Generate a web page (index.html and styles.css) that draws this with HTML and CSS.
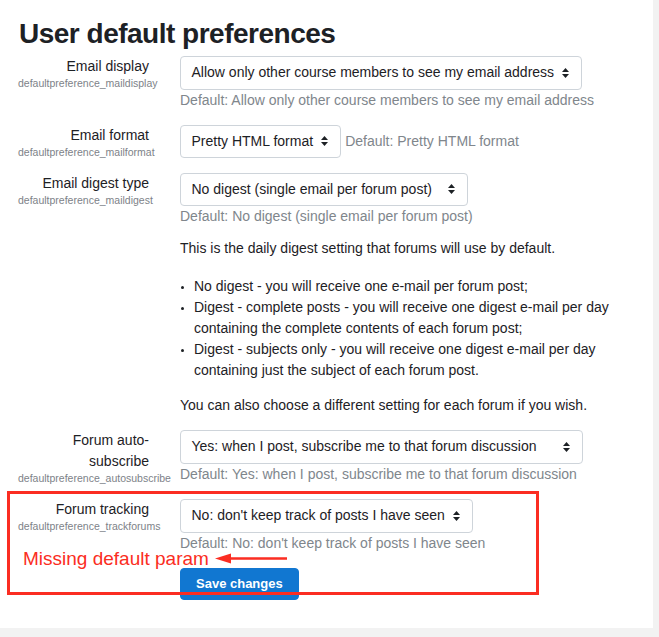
FILE: index.html
```html
<!DOCTYPE html>
<html lang="en">
<head>
<meta charset="utf-8">
<title>User default preferences</title>
<link rel="stylesheet" href="styles.css">
</head>
<body>
<main class="card">
  <h2 class="title">User default preferences</h2>
  <form class="form">
    <div class="frow">
      <div class="flabel"><label>Email display</label><small>defaultpreference_maildisplay</small></div>
      <div class="felement">
        <div class="fline">
          <div class="select"><span>Allow only other course members to see my email address</span><svg class="caret" viewBox="0 0 7 10"><path d="M0 4L3.5 0L7 4Z M0 6L7 6L3.5 10Z"/></svg></div>
          <span class="defaultinfo">Default: Allow only other course members to see my email address</span>
        </div>
      </div>
    </div>
    <div class="frow">
      <div class="flabel"><label>Email format</label><small>defaultpreference_mailformat</small></div>
      <div class="felement">
        <div class="fline">
          <div class="select"><span>Pretty HTML format</span><svg class="caret" viewBox="0 0 7 10"><path d="M0 4L3.5 0L7 4Z M0 6L7 6L3.5 10Z"/></svg></div>
          <span class="defaultinfo">Default: Pretty HTML format</span>
        </div>
      </div>
    </div>
    <div class="frow">
      <div class="flabel"><label>Email digest type</label><small>defaultpreference_maildigest</small></div>
      <div class="felement">
        <div class="fline">
          <div class="select select--m"><span>No digest (single email per forum post)</span><svg class="caret" viewBox="0 0 7 10"><path d="M0 4L3.5 0L7 4Z M0 6L7 6L3.5 10Z"/></svg></div>
          <span class="defaultinfo">Default: No digest (single email per forum post)</span>
        </div>
        <div class="desc">
          <p>This is the daily digest setting that forums will use by default.</p>
          <ul>
            <li>No digest - you will receive one e-mail per forum post;</li>
            <li>Digest - complete posts - you will receive one digest e-mail per day containing the complete contents of each forum post;</li>
            <li>Digest - subjects only - you will receive one digest e-mail per day containing just the subject of each forum post.</li>
          </ul>
          <p class="last">You can also choose a different setting for each forum if you wish.</p>
        </div>
      </div>
    </div>
    <div class="frow">
      <div class="flabel"><label>Forum auto-subscribe</label><small>defaultpreference_autosubscribe</small></div>
      <div class="felement">
        <div class="fline">
          <div class="select select--l"><span>Yes: when I post, subscribe me to that forum discussion</span><svg class="caret" viewBox="0 0 7 10"><path d="M0 4L3.5 0L7 4Z M0 6L7 6L3.5 10Z"/></svg></div>
          <span class="defaultinfo">Default: Yes: when I post, subscribe me to that forum discussion</span>
        </div>
      </div>
    </div>
    <div class="frow">
      <div class="flabel"><label>Forum tracking</label><small>defaultpreference_trackforums</small></div>
      <div class="felement">
        <div class="fline">
          <div class="select"><span>No: don't keep track of posts I have seen</span><svg class="caret" viewBox="0 0 7 10"><path d="M0 4L3.5 0L7 4Z M0 6L7 6L3.5 10Z"/></svg></div>
          <span class="defaultinfo">Default: No: don't keep track of posts I have seen</span>
        </div>
      </div>
    </div>
    <div class="frow">
      <div class="flabel"></div>
      <div class="felement"><button type="button" class="btn">Save changes</button></div>
    </div>
  </form>
  <div class="annot-box"></div>
  <div class="annot-note">Missing default param</div>
  <svg class="annot-arrow" viewBox="0 0 72 11"><path d="M0 5.5L16 0.5L16 10.5Z"/><rect x="14" y="4.25" width="58" height="2.5"/></svg>
</main>
</body>
</html>
```
FILE: styles.css
```css
* { box-sizing: border-box; }
html, body { margin: 0; padding: 0; }
body {
  background: #f2f2f2;
  font-family: "Liberation Sans", Arial, sans-serif;
  font-size: 14px;
  line-height: 1.5;
  color: #1d2125;
}
.card {
  position: relative;
  width: 653px;
  height: 628px;
  background: #fff;
  padding-top: 16.5px;
}
.title {
  margin: 0 0 6px 19px;
  font-size: 28px;
  line-height: 1.2;
  font-weight: 700;
  letter-spacing: -0.5px;
}
.form { margin: 0; }
.frow {
  display: grid;
  grid-template-columns: 131px 1fr;
  column-gap: 31px;
  padding: 0 15px 0 18px;
  margin-bottom: 14px;
}
.flabel label {
  display: block;
  text-align: right;
}
.flabel small {
  display: block;
  font-size: 10.5px;
  line-height: 13px;
  color: #7d8288;
  white-space: nowrap;
}
.fline {
  display: flex;
  flex-wrap: wrap;
  align-items: baseline;
  column-gap: 4px;
}
.select {
  display: inline-flex;
  align-items: center;
  height: 33.5px;
  border: 1px solid #ced4da;
  border-radius: 4px;
  padding: 0 12px 0 10.5px;
  color: #1d2125;
  white-space: nowrap;
  background: #fff;
}
.caret {
  width: 7px;
  height: 10px;
  margin-left: 8px;
  flex: none;
  fill: #1d2125;
}
.select--m .caret { margin-left: 16px; }
.select--l .caret { margin-left: 26px; }
.defaultinfo { color: #80868c; }
.desc p { margin: 11px 0 0; }
.desc ul { margin: 17px 0 0; padding-left: 14px; }
.desc li::marker { font-size: 10px; }
.desc p.last { margin-top: 14px; }
.btn {
  font-family: "Liberation Sans", Arial, sans-serif;
  font-size: 13px;
  font-weight: 700;
  line-height: 20px;
  color: #fff;
  background: #1177d1;
  border: 1px solid #1177d1;
  border-radius: 4px;
  padding: 5px 15px;
  height: 32px;
}
.annot-box {
  position: absolute;
  left: 7px;
  top: 491px;
  width: 532px;
  height: 104px;
  border: 3px solid #fb2d22;
}
.annot-note {
  position: absolute;
  left: 23px;
  top: 548px;
  font-size: 19px;
  line-height: 21px;
  color: #fb2d22;
}
.annot-arrow {
  position: absolute;
  left: 215px;
  top: 553px;
  width: 72px;
  height: 11px;
  fill: #fb2d22;
}
```
